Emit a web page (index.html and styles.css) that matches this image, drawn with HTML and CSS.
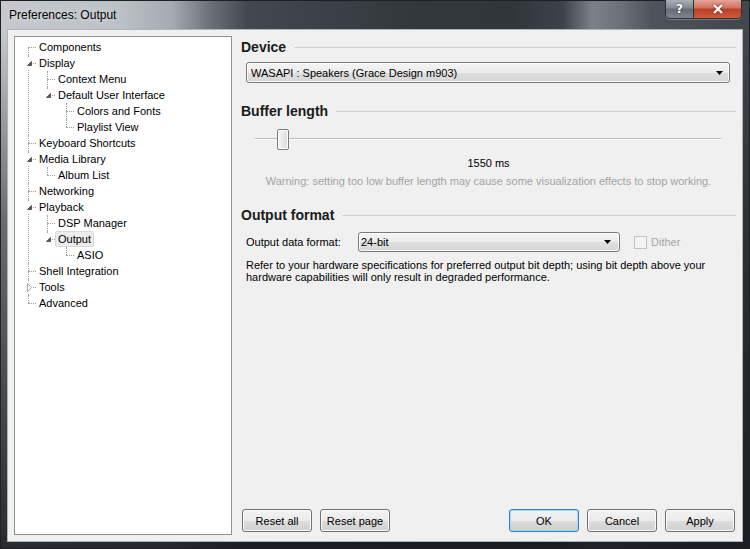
FILE: index.html
```html
<!DOCTYPE html>
<html>
  <head>
    <title>Preferences: Output</title>
    <link rel="stylesheet" href="styles.css">
  </head>
  <body>
    <div class="window">
      <div class="titlebar">
        <span class="title">Preferences: Output</span>
        <div class="caption-buttons">
          <div class="caption-btn help">?</div>
          <div class="caption-btn close">
            <svg width="12" height="10" viewBox="0 0 12 10"><path d="M2 1L10 9M10 1L2 9" stroke="#fff" stroke-width="2.4"/></svg>
          </div>
        </div>
      </div>

      <div class="client">
        <div class="tree">
          <ul>
            <li><span class="label">Components</span></li>
            <li>
              <span class="twisty"><svg width="10" height="12"><path d="M8.5 4.5V8.5H4.5Z" fill="#595959" stroke="#595959"/></svg></span>
              <span class="label">Display</span>
              <ul>
                <li><span class="label">Context Menu</span></li>
                <li>
                  <span class="twisty"><svg width="10" height="12"><path d="M8.5 4.5V8.5H4.5Z" fill="#595959" stroke="#595959"/></svg></span>
                  <span class="label">Default User Interface</span>
                  <ul>
                    <li><span class="label">Colors and Fonts</span></li>
                    <li><span class="label">Playlist View</span></li>
                  </ul>
                </li>
              </ul>
            </li>
            <li><span class="label">Keyboard Shortcuts</span></li>
            <li>
              <span class="twisty"><svg width="10" height="12"><path d="M8.5 4.5V8.5H4.5Z" fill="#595959" stroke="#595959"/></svg></span>
              <span class="label">Media Library</span>
              <ul>
                <li><span class="label">Album List</span></li>
              </ul>
            </li>
            <li><span class="label">Networking</span></li>
            <li>
              <span class="twisty"><svg width="10" height="12"><path d="M8.5 4.5V8.5H4.5Z" fill="#595959" stroke="#595959"/></svg></span>
              <span class="label">Playback</span>
              <ul>
                <li><span class="label">DSP Manager</span></li>
                <li class="selected">
                  <span class="twisty"><svg width="10" height="12"><path d="M8.5 4.5V8.5H4.5Z" fill="#595959" stroke="#595959"/></svg></span>
                  <span class="label">Output</span>
                  <ul>
                    <li><span class="label">ASIO</span></li>
                  </ul>
                </li>
              </ul>
            </li>
            <li><span class="label">Shell Integration</span></li>
            <li>
              <span class="twisty"><svg width="10" height="12"><path d="M4.5 2.5L8.5 6.5L4.5 10.5Z" fill="#fff" stroke="#a6a6a6"/></svg></span>
              <span class="label">Tools</span>
            </li>
            <li><span class="label">Advanced</span></li>
          </ul>
        </div>

        <div class="page">
          <div class="section-title">Device</div>
          <div class="combo device">
            <span>WASAPI : Speakers (Grace Design m903)</span>
            <svg width="7" height="4"><path d="M0 0H7L3.5 4Z"/></svg>
          </div>

          <div class="section-title buffer">Buffer length</div>
          <div class="slider"><div class="thumb"></div></div>
          <div class="value">1550 ms</div>
          <div class="warning">Warning: setting too low buffer length may cause some visualization effects to stop working.</div>

          <div class="section-title format-title">Output format</div>
          <div class="format-row">
            <span class="field-label">Output data format:</span>
            <div class="combo format">
              <span>24-bit</span>
              <svg width="7" height="4"><path d="M0 0H7L3.5 4Z"/></svg>
            </div>
            <span class="check disabled"><span class="box"></span>Dither</span>
          </div>
          <p class="note">Refer to your hardware specifications for preferred output bit depth; using bit depth above your hardware capabilities will only result in degraded performance.</p>

          <div class="buttons">
            <button>Reset all</button>
            <button>Reset page</button>
            <span class="spacer"></span>
            <button class="default">OK</button>
            <button>Cancel</button>
            <button>Apply</button>
          </div>
        </div>
      </div>
    </div>
  </body>
</html>
```

FILE: styles.css
```css
* {
  box-sizing: border-box;
}

body {
  margin: 0;
  background: #2a2e33;
  font-family: "Liberation Sans", Arial, sans-serif;
  font-size: 11px;
  color: #000;
}

.window {
  width: 750px;
  height: 549px;
  display: flex;
  flex-direction: column;
  padding-bottom: 8px;
  background:
    linear-gradient(to bottom, rgba(28, 32, 36, 0) 30px, rgba(28, 32, 36, 0.55) 220px, rgba(22, 25, 29, 0.9) 549px),
    linear-gradient(to right, #c5c9ce 0%, #bcc1c6 16%, #a4aab0 23%, #6b7177 28%, #42484e 33%, #33383d 55%, #31363b 68%, #3c4248 75%, #7c8288 79%, #6a7076 83%, #4d5359 87%, #40464c 100%);
  box-shadow: inset 0 0 0 1px #1d2125;
}

/* title bar */
.titlebar {
  height: 30px;
  display: flex;
  align-items: flex-start;
}

.title {
  padding: 1px 0 0 9px;
  font-size: 12px;
  line-height: 29px;
  color: #000;
  text-shadow: 0 0 6px rgba(255, 255, 255, 0.7);
}

.caption-buttons {
  margin-left: auto;
  margin-right: 8px;
  display: flex;
  height: 19px;
  border: 1px solid #2b3035;
  border-top: none;
  border-radius: 0 0 5px 5px;
  overflow: hidden;
  box-shadow: 0 1px 0 rgba(255, 255, 255, 0.25);
}

.caption-btn {
  display: flex;
  align-items: center;
  justify-content: center;
  color: #fff;
}

.help {
  width: 28px;
  border-right: 1px solid #2b3035;
  background: linear-gradient(#a9afb5, #828990 45%, #646b72 50%, #7e858c);
  font-family: "DejaVu Sans", sans-serif;
  font-weight: bold;
  font-size: 12px;
  text-shadow: 0 0 2px #222;
}

.close {
  width: 47px;
  background: linear-gradient(#e4a598, #d0705f 45%, #b93e25 50%, #cf5b3c);
}

.close svg {
  filter: drop-shadow(0 0 1px #5a1a10);
}

/* client area */
.client {
  flex: 1;
  margin: 0 8px;
  display: flex;
  gap: 9px;
  padding: 6px;
  background: #f0f0f0;
  box-shadow: 0 0 0 1px #aeb4ba;
}

/* tree */
.tree {
  width: 218px;
  background: #fff;
  border: 1px solid #8e9297;
  line-height: 16px;
}

.tree ul {
  list-style: none;
  margin: 0;
  padding: 0 0 0 19px;
}

.tree > ul {
  padding: 2px 0 0 21px;
}

.tree li {
  position: relative;
  white-space: nowrap;
}

.tree li::before {
  content: "";
  position: absolute;
  left: -8px;
  top: 0;
  bottom: 0;
  border-left: 1px dotted #a0a0a0;
}

.tree li:last-child::before {
  bottom: auto;
  height: 8px;
}

.tree > ul > li:first-child::before {
  top: 8px;
}

.tree li::after {
  content: "";
  position: absolute;
  left: -8px;
  top: 8px;
  width: 8px;
  border-top: 1px dotted #a0a0a0;
}

.twisty {
  position: absolute;
  left: -13px;
  top: 2px;
  width: 10px;
  height: 12px;
  background: #fff;
  z-index: 1;
}

.twisty svg {
  display: block;
}

.label {
  display: inline-block;
  vertical-align: top;
  height: 16px;
  line-height: 14px;
  padding: 0 2px;
  border: 1px solid transparent;
  border-radius: 2px;
}

.selected > .label {
  background: #ececec;
  border-color: #dadada;
}

/* settings page */
.page {
  flex: 1;
  display: flex;
  flex-direction: column;
  padding-bottom: 3px;
}

.section-title {
  display: flex;
  align-items: center;
  gap: 8px;
  height: 22px;
  font-weight: bold;
  font-size: 14px;
  color: #1a1a1a;
}

.section-title::after {
  content: "";
  flex: 1;
  height: 1px;
  background: #d2d2d2;
}

.section-title.buffer {
  margin-top: 17px;
}

.section-title.format-title {
  margin-top: 16px;
}

.combo {
  display: flex;
  align-items: center;
  justify-content: space-between;
  border: 1px solid #7a7a7a;
  border-radius: 3px;
  background: linear-gradient(#f4f4f4, #ececec 50%, #dfdfdf 51%, #d6d6d6);
  box-shadow: inset 0 0 0 1px rgba(255, 255, 255, 0.8);
}

.combo.device {
  height: 21px;
  margin: 4px 6px 0 5px;
  padding: 0 6px 0 4px;
}

.combo.format {
  width: 262px;
  height: 20px;
  padding: 0 8px 0 2px;
}

.slider {
  height: 21px;
  margin: 7px 15px 0 14px;
  background: linear-gradient(to bottom, transparent 9px, #bcbcbc 9px, #bcbcbc 10px, #fcfcfc 10px, #fcfcfc 11px, transparent 11px);
}

.thumb {
  width: 12px;
  height: 21px;
  margin-left: 22px;
  border: 1px solid #7c7c7c;
  border-radius: 2px;
  background: linear-gradient(to right, #f6f6f6, #e6e6e6 60%, #d8d8d8);
  box-shadow: inset 0 0 0 1px #fff;
}

.value {
  margin-top: 6px;
  line-height: 14px;
  text-align: center;
}

.warning {
  margin-top: 4px;
  line-height: 14px;
  text-align: center;
  color: #a3a3a3;
}

.format-row {
  display: flex;
  align-items: center;
  height: 20px;
  margin-top: 6px;
  padding-left: 5px;
}

.field-label {
  width: 112px;
}

.check {
  display: flex;
  align-items: center;
  gap: 4px;
  margin-left: 14px;
}

.check .box {
  width: 13px;
  height: 13px;
  border: 1px solid #c2c2c2;
  background: #f4f4f4;
}

.check.disabled {
  color: #a6a6a6;
}

.note {
  margin: 7px 0 0;
  padding-left: 5px;
  line-height: 12px;
}

.buttons {
  margin-top: auto;
  display: flex;
  gap: 8px;
  padding: 0 1px;
}

.spacer {
  flex: 1;
}

.buttons button {
  width: 70px;
  height: 23px;
  padding: 0;
  font-family: inherit;
  font-size: 11px;
  color: #000;
  border: 1px solid #707070;
  border-radius: 3px;
  background: linear-gradient(#f2f2f2, #ebebeb 50%, #dddddd 51%, #cfcfcf);
  box-shadow: inset 0 0 0 1px #fcfcfc;
}

.buttons button.default {
  border-color: #3c7fb1;
  box-shadow: inset 0 0 0 1px #9fdcf7;
}
```
